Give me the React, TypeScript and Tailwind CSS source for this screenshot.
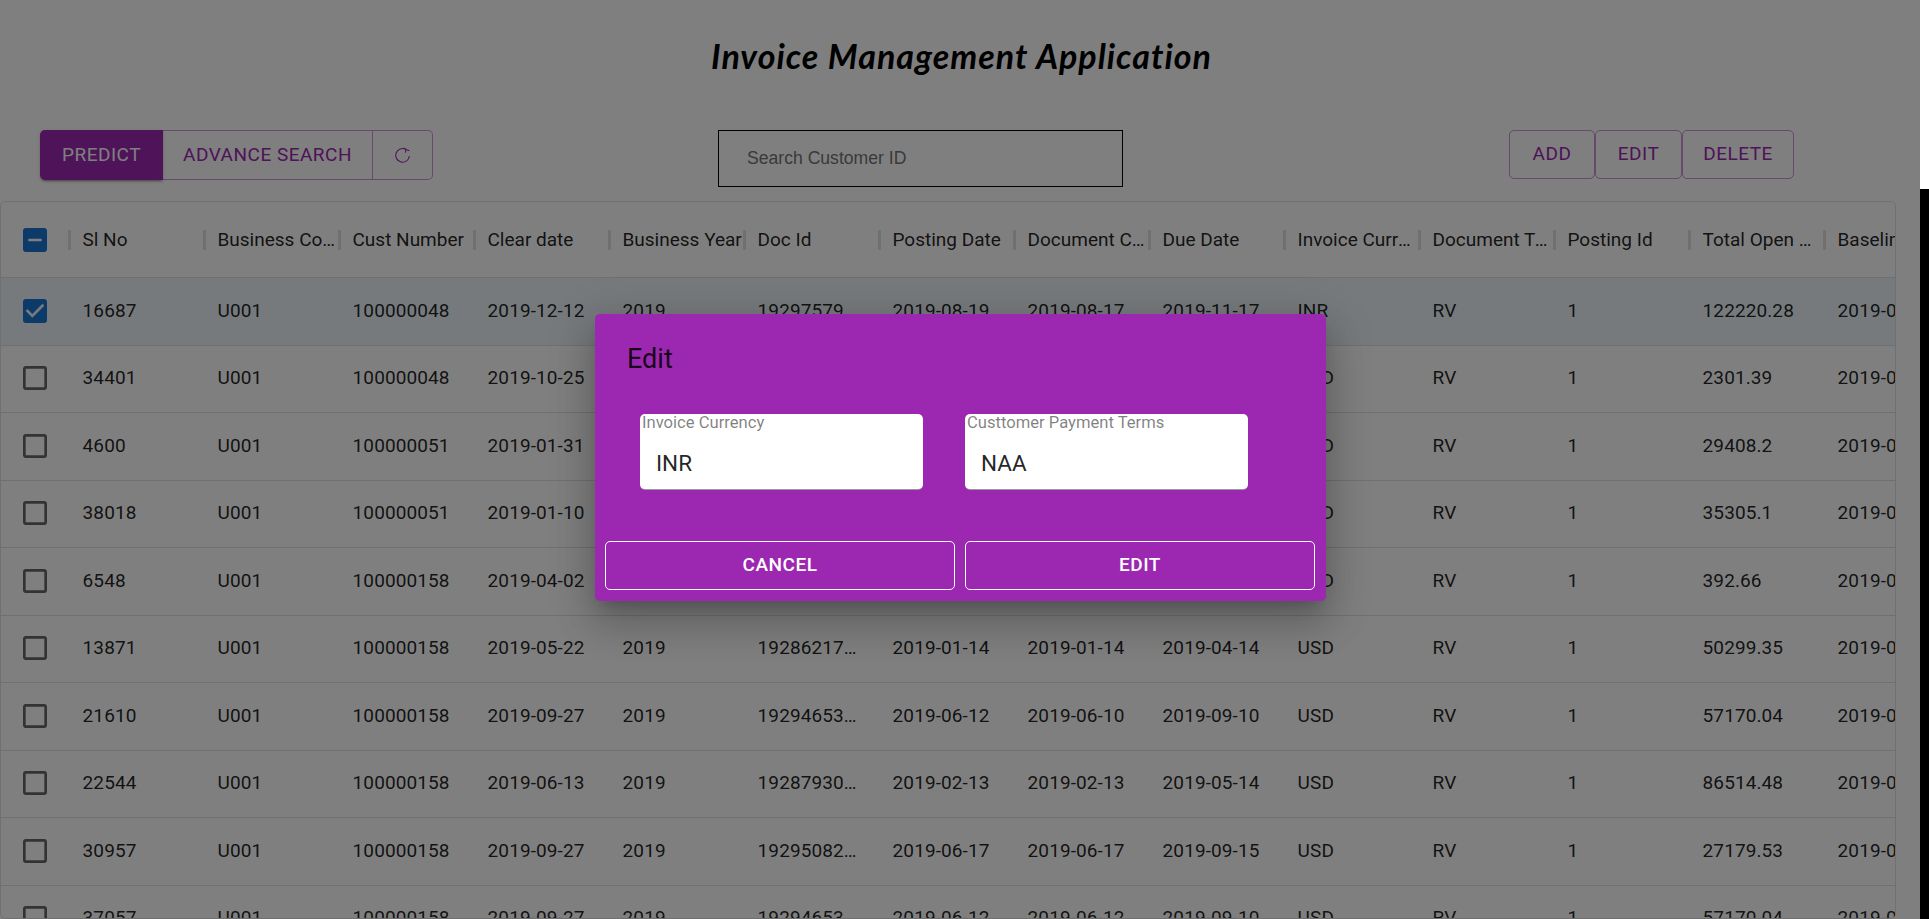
import React from "react";

const COLS = ["Sl No","Business Code","Cust Number","Clear date","Business Year","Doc Id","Posting Date","Document Create Date","Due Date","Invoice Currency","Document Type","Posting Id","Total Open Amount","Baseline Date"];

const base: [string,string,string,string,string,string,string,string,string][] = [
["16687","100000048","2019-12-12","19297579","2019-08-19","2019-08-17","2019-11-17","INR","122220.28"],
["34401","100000048","2019-10-25","19290412","2019-05-10","2019-05-10","2019-08-10","USD","2301.39"],
["4600","100000051","2019-01-31","19283210","2018-10-12","2018-10-12","2019-01-12","USD","29408.2"],
["38018","100000051","2019-01-10","19282561","2018-10-01","2018-10-01","2019-01-01","USD","35305.1"],
["6548","100000158","2019-04-02","19285014","2019-01-02","2019-01-02","2019-04-02","USD","392.66"],
["13871","100000158","2019-05-22","1928621754","2019-01-14","2019-01-14","2019-04-14","USD","50299.35"],
["21610","100000158","2019-09-27","1929465301","2019-06-12","2019-06-10","2019-09-10","USD","57170.04"],
["22544","100000158","2019-06-13","1928793012","2019-02-13","2019-02-13","2019-05-14","USD","86514.48"],
["30957","100000158","2019-09-27","1929508244","2019-06-17","2019-06-17","2019-09-15","USD","27179.53"],
["37057","100000158","2019-09-27","1929465302","2019-06-12","2019-06-12","2019-09-10","USD","57170.04"],
];

function Check({ kind }: { kind: "blank" | "checked" | "mixed" }) {
  const d =
    kind === "checked"
      ? "M19 3H5c-1.11 0-2 .9-2 2v14c0 1.1.89 2 2 2h14c1.11 0 2-.9 2-2V5c0-1.1-.89-2-2-2zm-9 14l-5-5 1.41-1.41L10 14.17l7.59-7.59L19 8l-9 9z"
      : kind === "mixed"
      ? "M19 3H5c-1.1 0-2 .9-2 2v14c0 1.1.9 2 2 2h14c1.1 0 2-.9 2-2V5c0-1.1-.9-2-2-2zm-2 10H7v-2h10v2z"
      : "M19 5v14H5V5h14m0-2H5c-1.1 0-2 .9-2 2v14c0 1.1.9 2 2 2h14c1.1 0 2-.9 2-2V5c0-1.1-.9-2-2-2z";
  return (
    <svg viewBox="0 0 24 24" className={kind === "blank" ? "w-[32px] h-[32px] fill-[#000000]/60" : "w-[32px] h-[32px] fill-[#1976d2]"}>
      <path d={d} />
    </svg>
  );
}

function Refresh() {
  return (
    <svg viewBox="0 0 16 16" className="w-[17px] h-[17px] fill-none stroke-[#9c27b0]" strokeWidth="1">
      <path d="M11 2.2A6.4 6.4 0 1 0 14.4 8.4" />
      <path d="M9.2 0.8 11.4 2.4 10.6 5.2 M11.4 2.4 14.6 3.6" />
    </svg>
  );
}

const outlined = "flex items-center justify-center border border-[#9c27b0]/50 text-[#9c27b0] text-[19px] tracking-[0.5px] font-normal uppercase";

function Row({ r, i }: { r: string[]; i: number }) {
  const cells = [r[0], "U001", r[1], r[2], "2019", r[3], r[4], r[5], r[6], r[7], "RV", "1", r[8], "2019-08-17"];
  return (
    <div className={`flex h-[67.5px] shrink-0 items-center border-b border-[#e0e0e0] pb-[1px] ${i === 0 ? "bg-[#1976d2]/8" : ""}`}>
      <div className="w-[67px] shrink-0 flex justify-center">
        <Check kind={i === 0 ? "checked" : "blank"} />
      </div>
      {cells.map((c, k) => (
        <div key={k} className="w-[135px] shrink-0 pl-[14.6px] pr-[16px] truncate">{c}</div>
      ))}
    </div>
  );
}

export default function App() {
  return (
    <div className="relative h-[919px] w-full overflow-hidden bg-white font-[Roboto,sans-serif]">
      <div className="w-[1920px]">
        <div className="h-[130px] pt-[35px] pl-[3px] text-center font-[Lato,sans-serif] italic font-bold text-[34px] tracking-[1px] leading-[42px] text-black">
          Invoice Management Application
        </div>
        <div className="flex h-[71px] items-start pl-[40px] pr-[126px]">
          <div className="flex h-[50px] w-[393px] rounded-[5px]">
            <div className="flex w-[123px] items-center justify-center rounded-l-[5px] bg-[#9c27b0] text-white text-[19px] tracking-[0.5px] font-normal uppercase shadow-[0_3px_1px_-2px_rgba(0,0,0,0.2),0_2px_2px_0_rgba(0,0,0,0.14),0_1px_5px_0_rgba(0,0,0,0.12)]">Predict</div>
            <div className={`${outlined} w-[210px] border-l-0`}>Advance Search</div>
            <div className={`${outlined} w-[60px] border-l-0 rounded-r-[5px]`}><Refresh /></div>
          </div>
          <div className="ml-[285px] flex h-[57px] w-[405px] items-center border border-black pl-[28px] font-[Liberation_Sans,sans-serif] text-[17.6px] text-[#757575]">
            Search Customer ID
          </div>
          <div className="ml-auto flex h-[49px]">
            <div className={`${outlined} w-[86px] rounded-[5px]`}>Add</div>
            <div className={`${outlined} w-[87px] rounded-[5px]`}>Edit</div>
            <div className={`${outlined} w-[112px] rounded-[5px]`}>Delete</div>
          </div>
        </div>
        <div className="h-[718px] w-[1896px] overflow-hidden rounded-[5px] border border-[#e0e0e0] text-[19px] tracking-[0.1px] text-black/87">
          <div className="flex h-[76px] items-center border-b border-[#e0e0e0] pt-[1px]">
            <div className="w-[66.5px] shrink-0 flex justify-center pl-[2px]"><Check kind="mixed" /></div>
            {COLS.map((c) => (
              <div key={c} className="flex w-[135px] shrink-0 items-center">
                <span className="h-[20px] w-[3px] shrink-0 bg-[#e0e0e0]" />
                <span className={`ml-[12px] min-w-0 flex-1 truncate tracking-[0px] font-normal ${c === "Total Open Amount" ? "mr-[2px]" : "mr-[-2px]"}`}>{c}</span>
              </div>
            ))}
          </div>
          {base.map((r, i) => <Row key={r[0]} r={r} i={i} />)}
        </div>
      </div>

      <div className="absolute left-0 top-0 h-full w-[1920px] bg-black/50" />
      <div className="absolute left-[1920px] top-[189px] bottom-0 right-0 bg-black" />

      <div className="absolute left-[595px] top-[314px] h-[287px] w-[731px] rounded-[5px] bg-[#9c27b0] shadow-[0_11px_15px_-7px_rgba(0,0,0,0.2),0_24px_38px_3px_rgba(0,0,0,0.14),0_9px_46px_8px_rgba(0,0,0,0.12)]">
        <div className="pl-[32px] pt-[27px] text-[27px] leading-[36px] text-black/87">Edit</div>
        <div className="mt-[37px] flex gap-[42px] pl-[45px]">
          {[["Invoice Currency","INR"],["Custtomer Payment Terms","NAA"]].map(([l,v]) => (
            <div key={l} className="h-[76px] w-[283px] rounded-[5px] bg-white border-b border-[#000000]/40 pl-[2px]">
              <div className="text-[16.6px] leading-[18px] text-black/50">{l}</div>
              <div className="mt-[13px] pl-[14px] text-[22.5px] leading-[36px] text-black/87">{v}</div>
            </div>
          ))}
        </div>
        <div className="mt-[51px] flex gap-[10px] pl-[10px]">
          {["Cancel","Edit"].map((b) => (
            <div key={b} className="flex h-[49px] w-[350px] items-center justify-center rounded-[5px] border border-white text-[19px] tracking-[0.5px] font-medium uppercase text-white">{b}</div>
          ))}
        </div>
      </div>
    </div>
  );
}
